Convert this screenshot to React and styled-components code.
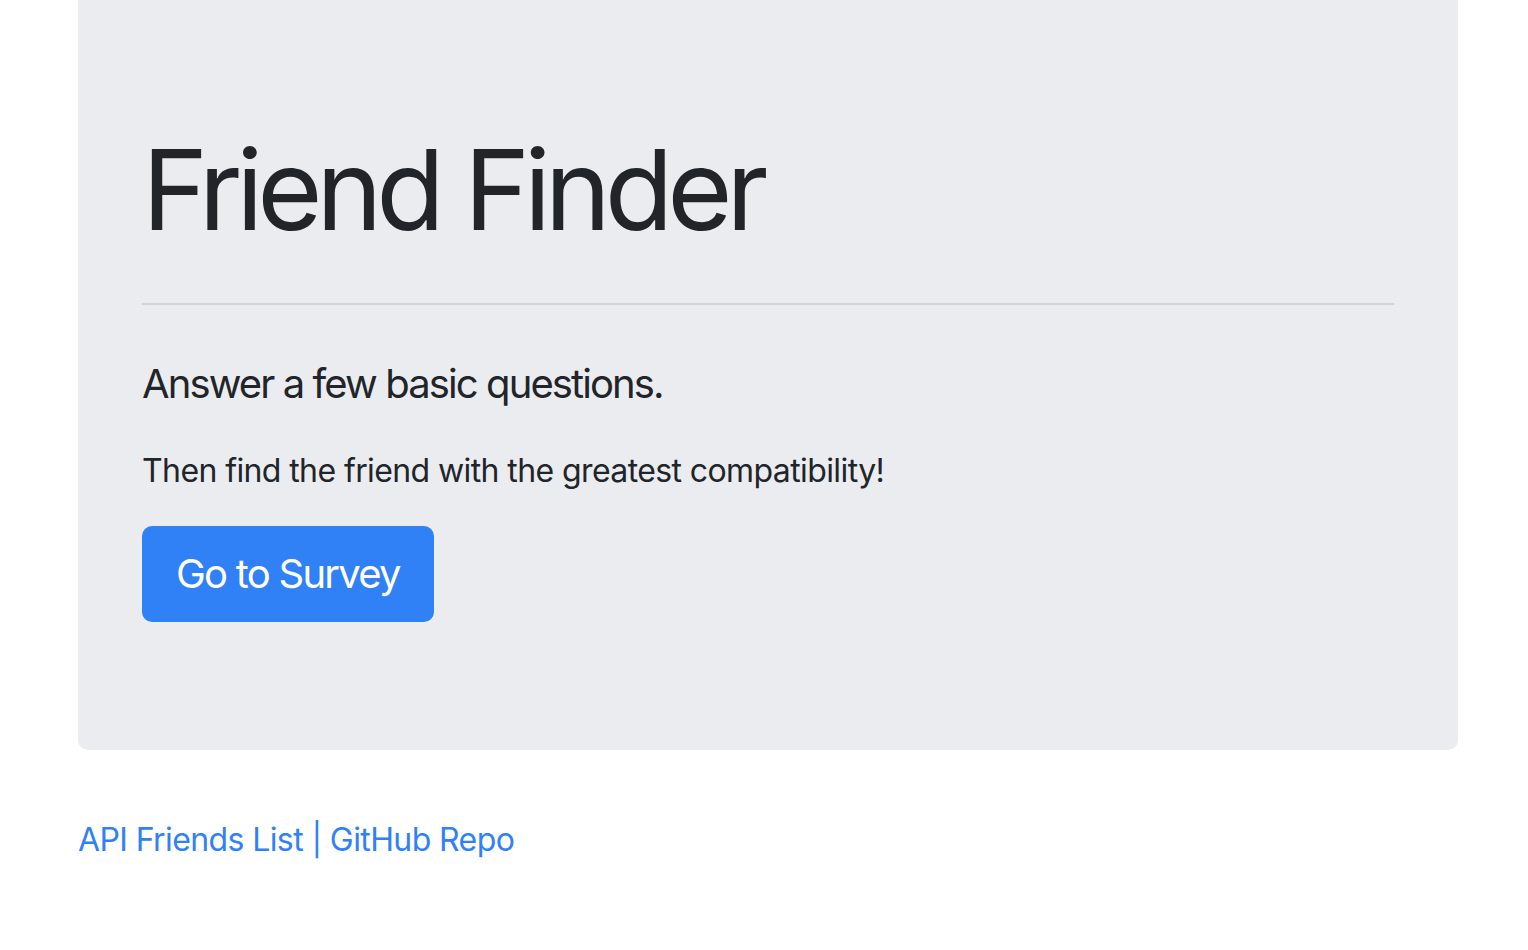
import React from "react";
import styled, { createGlobalStyle } from "styled-components";

const GlobalStyle = createGlobalStyle`
  html, body {
    margin: 0;
    padding: 0;
    background: #fff;
  }
  body {
    font-family: Inter, "Noto Sans", "Liberation Sans", sans-serif;
    color: #212529;
    overflow: hidden;
  }
`;

function App() {
  return (
    <>
      <GlobalStyle />
      <Page>
        <Jumbotron>
          <Title>Friend Finder</Title>
          <Rule />
          <Lead>Answer a few basic questions.</Lead>
          <Text>Then find the friend with the greatest compatibility!</Text>
          <SurveyButton href="#survey">Go to Survey</SurveyButton>
        </Jumbotron>
        <Footer>
          <FooterLink href="#api">API Friends List</FooterLink>
          {" | "}
          <FooterLink href="#repo">GitHub Repo</FooterLink>
        </Footer>
      </Page>
    </>
  );
}

const Page = styled.div`
  width: 1380px;
  margin-left: 78px;
`;

const Jumbotron = styled.div`
  display: flex;
  flex-direction: column;
  align-items: flex-start;
  margin-top: -8px;
  margin-bottom: 66px;
  padding: 130px 64px 128px;
  background-color: #ebecf0;
  border-radius: 10px;
`;

const Title = styled.h1`
  margin: 0;
  font-size: 112px;
  font-weight: 400;
  line-height: 1.2;
  letter-spacing: -6.2px;
`;

const Rule = styled.hr`
  align-self: stretch;
  margin: 47px 0 49px;
  border: 0;
  border-top: 2px solid rgba(0, 0, 0, 0.1);
`;

const Lead = styled.p`
  margin: 0 0 33px;
  font-size: 40px;
  font-weight: 400;
  line-height: 1.5;
  letter-spacing: -1.9px;
`;

const Text = styled.p`
  margin: 0 0 31px;
  font-size: 32px;
  line-height: 1.5;
  letter-spacing: -0.6px;
`;

const SurveyButton = styled.a`
  display: inline-block;
  padding: 16px 32px;
  border: 2px solid #3181f6;
  border-radius: 10px;
  background-color: #3181f6;
  color: #fff;
  font-size: 40px;
  line-height: 1.5;
  letter-spacing: -1.75px;
  text-decoration: none;
`;

const Footer = styled.p`
  margin: 0;
  font-size: 32px;
  line-height: 1.5;
  letter-spacing: -0.6px;
  color: #3181f6;
`;

const FooterLink = styled.a`
  color: #3181f6;
  text-decoration: none;
`;

export default App;
